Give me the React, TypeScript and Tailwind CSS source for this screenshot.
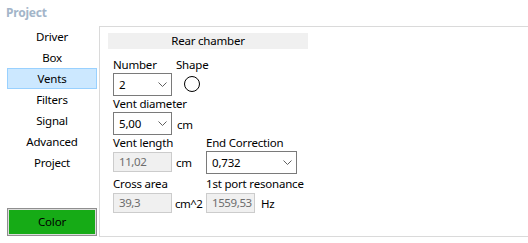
import React from 'react';

const navItems = ['Driver', 'Box', 'Vents', 'Filters', 'Signal', 'Advanced', 'Project'];

const Chevron = () => (
  <svg width="9" height="5" viewBox="0 0 9 5" className="shrink-0">
    <polyline points="0.5,0.5 4.5,4.5 8.5,0.5" fill="none" stroke="#606060" strokeWidth="1" />
  </svg>
);

interface ComboProps {
  value: string;
  width: string;
}

const Combo = ({ value, width }: ComboProps) => (
  <div className={`${width} h-[23px] border border-[#7a7a7a] bg-white flex items-center justify-between pl-[5px] pr-[4px]`}>
    <span className="leading-none">{value}</span>
    <Chevron />
  </div>
);

const ReadOnlyBox = ({ value, width }: ComboProps) => (
  <div className={`${width} h-[20px] mt-[1px] border border-[#cccccc] bg-[#f0f0f0] flex items-center pl-[5px] text-[#6d6d6d] tracking-[-0.4px]`}>
    <span className="leading-none">{value}</span>
  </div>
);

export default function App() {
  return (
    <div className="w-[528px] h-[243px] bg-white font-['Noto_Sans',sans-serif] text-[11.5px] tracking-[-0.2px] leading-[16px] text-black">
      {/* Title */}
      <div className="h-[26px] pl-[6px] pt-[5px] text-[12px] font-bold text-[#a3b5c9]">Project</div>

      <div className="flex h-[211px]">
        {/* Sidebar */}
        <div className="w-[99px] flex flex-col">
          {navItems.map((item) => (
            <div
              key={item}
              className={
                item === 'Vents'
                  ? 'ml-[7px] w-[90px] h-[21px] flex items-center justify-center bg-[#cce8ff] border border-[#99d1ff]'
                  : 'ml-[7px] w-[90px] h-[21px] flex items-center justify-center'
              }
            >
              {item}
            </div>
          ))}
          <div className="mt-auto mb-[1px] ml-[7px] w-[90px] h-[28px] border border-[#8f8f8f] p-[1px] bg-[#dcdcdc]">
            <div className="h-full bg-[#16ab16] flex items-center justify-center">Color</div>
          </div>
        </div>

        {/* Panel */}
        <div className="flex-1 border-t border-l border-b border-[#dadada] pl-[8px] pt-[6px]">
          <div className="w-[200px] h-[16px] bg-[#f0f0f0] flex items-center justify-center">Rear chamber</div>

          <div className="ml-[5px] mt-[8px]">
            {/* Number / Shape */}
            <div className="flex gap-[4px]">
              <div className="flex flex-col">
                <span>Number</span>
                <Combo value="2" width="w-[59px]" />
              </div>
              <div className="flex flex-col">
                <span>Shape</span>
                <div className="ml-[8px] mt-[3px] w-[16px] h-[16px] rounded-full border border-black" />
              </div>
            </div>

            {/* Vent diameter */}
            <div className="flex flex-col">
              <span>Vent diameter</span>
              <div className="flex items-center gap-[5px]">
                <Combo value="5,00" width="w-[59px]" />
                <span className="pt-[3px]">cm</span>
              </div>
            </div>

            {/* Length / correction / area / resonance */}
            <div className="grid grid-cols-[93px_auto] gap-y-[2px]">
              <div className="flex flex-col">
                <span>Vent length</span>
                <div className="flex items-end gap-[4px]">
                  <ReadOnlyBox value="11,02" width="w-[59px]" />
                  <span className="pb-[1px]">cm</span>
                </div>
              </div>
              <div className="flex flex-col">
                <span>End Correction</span>
                <Combo value="0,732" width="w-[91px]" />
              </div>
              <div className="flex flex-col">
                <span>Cross area</span>
                <div className="flex items-end gap-[3px]">
                  <ReadOnlyBox value="39,3" width="w-[59px]" />
                  <span className="pb-[1px] tracking-[-0.5px]">cm^2</span>
                </div>
              </div>
              <div className="flex flex-col">
                <span>1st port resonance</span>
                <div className="flex items-end gap-[6px]">
                  <ReadOnlyBox value="1559,53" width="w-[49px]" />
                  <span className="pb-[1px]">Hz</span>
                </div>
              </div>
            </div>
          </div>
        </div>
      </div>
    </div>
  );
}
